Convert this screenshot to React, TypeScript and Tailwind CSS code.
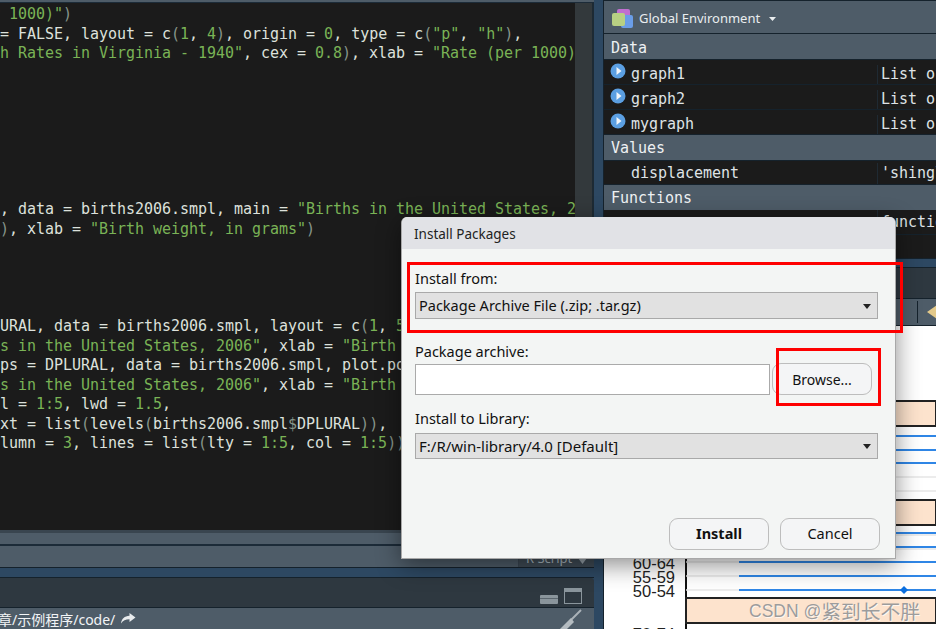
import React from "react";

const GREEN = "text-[#7ab356]";

// § toggles the green string/number colour, parens outside strings are dimmed
const codeLines = [
  '§r 1000)"§)',
  ' = FALSE, layout = c(§1§, §4§), origin = §0§, type = c(§"p"§, §"h"§),',
  ' §h Rates in Virginia - 1940"§, cex = §0.8§), xlab = §"Rate (per 1000)"§',
  "", "", "", "", "", "", "",
  ' , data = births2006.smpl, main = §"Births in the United States, 2006"§',
  ' ), xlab = §"Birth weight, in grams"§)',
  "", "", "", "",
  ' URAL, data = births2006.smpl, layout = c(§1§, §5§)',
  '§ s in the United States, 2006"§, xlab = §"Birth weight"§',
  " ps = DPLURAL, data = births2006.smpl, plot.points = FALSE,",
  '§ s in the United States, 2006"§, xlab = §"Birth weight"§',
  "ol = §1:5§, lwd = §1.5§,",
  " xt = list(levels(births2006.smpl$DPLURAL)),",
  "olumn = §3§, lines = list(lty = §1:5§, col = §1:5§))",
];

const renderCode = (line: string) =>
  line.split("§").map((part, i) =>
    i % 2 === 1 ? (
      <span key={i} className={GREEN}>{part}</span>
    ) : (
      part.split(/([()$])/).map((p, j) =>
        j % 2 === 1 ? <span key={j} className="text-[#87958a]">{p}</span> : p
      )
    )
  );

const mono = "font-['DejaVu_Sans_Mono',monospace] text-[15px] tracking-[-0.03px]";
const ui = "font-['Noto_Sans','Noto_Sans_CJK_SC',sans-serif]";

const PlayDot = () => (
  <svg width="16" height="16" viewBox="0 0 16 16" className="ml-[6px] mr-[5px] mt-[-7px] shrink-0">
    <circle cx="8" cy="8" r="7.5" fill="#5b9fe2" />
    <path d="M6.5 4 L11.5 8 L6.5 12 Z" fill="#f2f6fa" />
  </svg>
);

const EnvHeading = ({ label, cls }: { label: string; cls: string }) => (
  <div className={`h-[25px] bg-[#4e5c68] pl-[7px] text-[#eef1f3] ${mono} ${cls}`}>{label}</div>
);

const EnvRow = ({ name, value, expandable, cls }: { name: string; value: string; expandable?: boolean; cls: string }) => (
  <div className={`flex items-center overflow-hidden border-b border-[#15222c] bg-[#1b1b1b] text-[#dfe3e6] whitespace-pre ${mono} ${cls}`}>
    <div className="flex h-full w-[274px] shrink-0 items-center border-r border-[#1f2a33]">
      {expandable ? <PlayDot /> : <span className="w-[27px] shrink-0" />}
      <span>{name}</span>
    </div>
    <span className="pl-[3px]">{value}</span>
  </div>
);

const SelectBox = ({ label, cls }: { label: string; cls: string }) => (
  <div className={`flex w-[463px] items-center justify-between border border-[#a9a9a9] bg-[#e1e1e1] pl-[3px] pr-[5px] text-[#111] ${cls}`}>
    <span>{label}</span>
    <svg width="8" height="5" viewBox="0 0 8 5" className="mr-[1px]"><path d="M0 0 H8 L4 5 Z" fill="#222" /></svg>
  </div>
);

const DlgButton = ({ label, cls }: { label: string; cls: string }) => (
  <div className={`flex items-center justify-center rounded-[9px] border border-[#bdbdbd] bg-[#f4f5f6] text-[#111] ${cls}`}>{label}</div>
);

const peach = [401, 500, 598];
const rowYs = [35, 49, 62, 76, 90];

// the lattice plot behind the dialog
const Plot = () => (
  <svg width="332" height="303" viewBox="604 326 332 303" className="block">
    <rect x="604" y="326" width="332" height="303" fill="#fff" />
    <line x1="686" y1="326" x2="686" y2="629" stroke="#111" strokeWidth="2" />
    {peach.map((y) => (
      <g key={y}>
        <rect x="686" y={y} width="250" height="25" fill="#fde3cd" stroke="#222" strokeWidth="2" />
        {rowYs.map((d) => (
          <line key={d} x1="686" x2="936" y1={y + d} y2={y + d} stroke="#e6e6e6" strokeWidth="1.5" />
        ))}
      </g>
    ))}
    {[436, 450, 463, 533, 547, 562, 576, 590].map((y) => (
      <line key={y} x1="739" x2="936" y1={y} y2={y} stroke="#2f86e6" strokeWidth="2" />
    ))}
    <path d="M904 586 L908 590 L904 594 L900 590 Z" fill="#0a6fe0" />
    <g fontFamily="'Liberation Sans', sans-serif" fontSize="16.5" fill="#222" textAnchor="end">
      <text x="675" y="569">60-64</text>
      <text x="675" y="583">55-59</text>
      <text x="675" y="597">50-54</text>
      <text x="675" y="640">70-74</text>
    </g>
  </svg>
);

export default function App() {
  return (
    <div className="relative flex h-[629px] w-[936px] overflow-hidden bg-[#2d4862]">
      {/* source pane + console */}
      <div className="flex w-[594px] shrink-0 flex-col">
        <div className="h-[3px] border-b border-[#1c2b38] bg-[#4e5c68]" />
        <div className="flex h-[527px]">
          <div className={`w-[575px] overflow-hidden bg-[#1b1b1b] pt-[2px] text-[#dde1dc] ${mono}`}>
            <div className="-ml-[9px]">
              {codeLines.map((line, i) => (
                <div key={i} className="h-[19.5px] whitespace-pre leading-[19.5px]">{renderCode(line)}</div>
              ))}
            </div>
          </div>
          <div className="w-[17px] bg-[#33393c]" />
          <div className="w-[2px] bg-[#1d2a34]" />
        </div>
        <div className="h-[3px] bg-[#39454f]" />
        <div className="h-[13px] border-b-2 border-[#1c2b38] bg-[#4e5c68]" />
        <div className="flex h-[22px] justify-end border-b border-[#15222c] bg-[#4e5c68]">
          <div className={`flex w-[76px] items-end justify-between border-l border-[#3a4651] bg-[#3f4b55] pl-[7px] pr-[7px] text-[13px] leading-[17px] text-[#a9b6bf] ${ui}`}>
            <span>R Script</span>
            <svg width="9" height="6" viewBox="0 0 9 6" className="mb-[3px]"><path d="M0 0 H9 L4.5 6 Z" fill="#97a2aa" /></svg>
          </div>
        </div>
        <div className="h-[10px] border-b border-[#15222c]" />
        <div className="flex h-[30px] items-end justify-end gap-[6px] rounded-tr-[3px] border-b border-[#15222c] bg-[#2e3840] pb-[3px] pr-[12px]">
          <svg width="18" height="9" viewBox="0 0 18 9"><rect width="18" height="9" rx="1" fill="#8a959c" /><rect y="3" width="18" height="1" fill="#5b666e" /></svg>
          <svg width="18" height="16" viewBox="0 0 18 16"><rect x="0.5" y="0.5" width="17" height="15" fill="none" stroke="#8a959c" /><rect width="18" height="4" fill="#8a959c" /></svg>
        </div>
        <div className={`flex h-[21px] items-center justify-between bg-[#4e5c68] text-[14px] text-[#f2f4f6] whitespace-pre ${ui}`}>
          <div className="flex items-center overflow-hidden pt-[1px]">
            <span className="-ml-[2px]">章/示例程序/code/</span>
            <svg width="16" height="12" viewBox="0 0 16 12" className="ml-[5px]"><path d="M9.5 0 L15.5 4.5 L9.5 9 V6.2 C5.5 6.2 3 7.5 1 10.5 C1.5 6 4.5 3 9.5 2.8 Z" fill="#e8ebed" /></svg>
          </div>
          <svg width="26" height="20" viewBox="0 0 26 20" className="mr-[12px] self-end">
            <path d="M25 1 L14 12" stroke="#aab2b8" strokeWidth="2" />
            <path d="M15 9 L18 13 L11 20 H4 Z" fill="#b4bbc0" />
          </svg>
        </div>
      </div>

      {/* environment pane + plots */}
      <div className="ml-[9px] flex w-[333px] shrink-0 flex-col border-l border-[#15222c]">
        <div className="flex h-[34px] items-center gap-[5px] border-y border-[#15222c] bg-[#4e5c68] pl-[8px] pt-[3px]">
          <svg width="22" height="20" viewBox="0 0 22 20" className="shrink-0">
            <rect x="5" y="0" width="13" height="13" rx="2" fill="#c06fd0" />
            <rect x="9" y="6" width="12" height="13" rx="2" fill="#6a9de8" />
            <rect x="0" y="4" width="13" height="13" rx="2" fill="#b8d083" />
          </svg>
          <span className={`text-[13px] text-[#e9edef] ${ui}`}>Global Environment</span>
          <svg width="7" height="4" viewBox="0 0 7 4" className="ml-[4px]"><path d="M0 0 H7 L3.5 4 Z" fill="#e9edef" /></svg>
        </div>
        <EnvHeading label="Data" cls="leading-[29px]" />
        <div className="h-px bg-[#15222c]" />
        <EnvRow name="graph1" value="List of 9" expandable cls="h-[25px] pt-[5px]" />
        <EnvRow name="graph2" value="List of 9" expandable cls="h-[25px] pt-[5px]" />
        <EnvRow name="mygraph" value="List of 9" expandable cls="h-[25px] pt-[5px]" />
        <EnvHeading label="Values" cls="leading-[27px]" />
        <div className="h-px bg-[#15222c]" />
        <EnvRow name="displacement" value="'shingle'" cls="h-[24px] pt-[2px]" />
        <EnvHeading label="Functions" cls="leading-[27px]" />
        <div className="h-[48px] bg-[#1b1b1b]">
          <EnvRow name="" value="function" cls="h-[25px]" />
        </div>
        <div className="h-[10px] border-y border-[#15222c]" />
        <div className="h-[30px] bg-[#2e3840]" />
        <div className="flex h-[28px] items-center justify-end gap-[9px] border-y border-[#15222c] bg-[#4e5c68]">
          <div className="h-[22px] w-px bg-[#15222c]" />
          <svg width="10" height="16" viewBox="0 0 10 16" className="-mr-px"><path d="M10 1 L0 8 L10 15 Z" fill="#e3c98a" /></svg>
        </div>
        <Plot />
      </div>

      {/* install dialog */}
      <div className={`absolute left-[401px] top-[217px] flex h-[342px] w-[495px] flex-col overflow-hidden rounded-t-[6px] border-b border-r border-l border-[#a8a8a8] bg-[#f3f5f4] shadow-[0_6px_24px_rgba(0,0,0,0.45)] text-[#111] ${ui}`}>
        <div className="flex h-[32px] shrink-0 items-center bg-[#e1e2e6] pl-[12px] pt-[2px] text-[13.5px] text-[#222]">Install Packages</div>
        <div className="flex flex-1 flex-col pl-[13px] pr-[15px]">
          <div className="mt-[19px] h-[24px] text-[14.5px] leading-[20px]">Install from:</div>
          <SelectBox label="Package Archive File (.zip; .tar.gz)" cls="h-[27px] pt-[1px] text-[14.5px]" />
          <div className="mt-[20px] h-[24px] text-[14.5px] leading-[24px]">Package archive:</div>
          <div className="flex items-center">
            <div className="h-[31px] w-[355px] border border-[#aaaaaa] bg-white" />
            <DlgButton label="Browse..." cls="ml-[2px] h-[32px] w-[100px] text-[14px]" />
          </div>
          <div className="mt-[14px] h-[24px] text-[14.5px] leading-[18px]">Install to Library:</div>
          <SelectBox label="F:/R/win-library/4.0 [Default]" cls="h-[26px] pt-[1px] text-[15px]" />
          <div className="mt-[59px] flex justify-end gap-[11px]">
            <DlgButton label="Install" cls="h-[32px] w-[100px] text-[14.5px] font-bold" />
            <DlgButton label="Cancel" cls="h-[32px] w-[100px] text-[14.5px]" />
          </div>
        </div>
      </div>

      {/* red annotation boxes */}
      <div className="absolute left-[407px] top-[262px] h-[71px] w-[496px] border-[3px] border-[#fe0000]" />
      <div className="absolute left-[776px] top-[348px] h-[58px] w-[105px] border-[3px] border-[#fe0000]" />

      {/* watermark */}
      <div className="absolute left-[749px] top-[598px] flex h-[26px] items-center whitespace-pre text-[#9c9c9c] [text-shadow:1px_1px_0_rgba(255,255,255,0.7)]">
        <span className="font-['Liberation_Sans',sans-serif] text-[17.5px]">CSDN @</span>
        <span className="font-['Noto_Sans_CJK_SC',sans-serif] text-[19.8px]">紧到长不胖</span>
      </div>
    </div>
  );
}
